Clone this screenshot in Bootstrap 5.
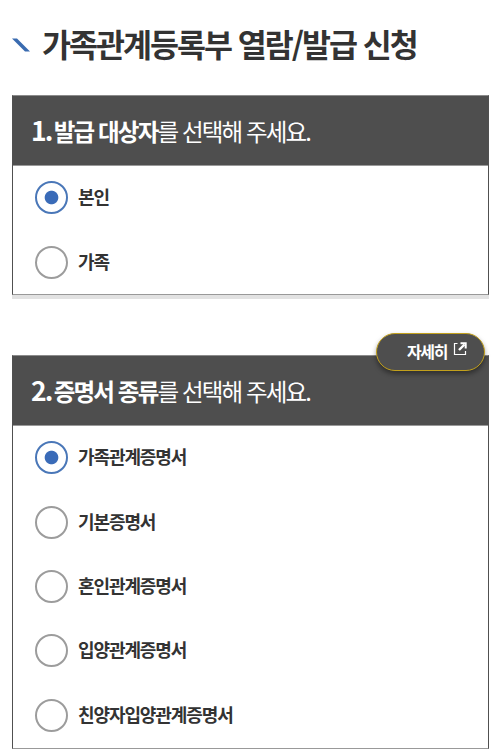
<!DOCTYPE html>
<html lang="ko">
<head>
<meta charset="utf-8">
<meta name="viewport" content="width=device-width, initial-scale=1">
<title>가족관계등록부 열람/발급 신청</title>
<link href="https://cdn.jsdelivr.net/npm/bootstrap@5.3.0/dist/css/bootstrap.min.css" rel="stylesheet">
<style>
  body { font-family: "Noto Sans CJK KR", sans-serif; color: #333; background: #fff; overflow: hidden; }
  .page { padding: 0 11px 0 12px; height: 749px; overflow: hidden; }
  .page-title { height: 95px; padding-bottom: 7px; }
  .page-title svg { width: 18px; height: 14px; margin: 1px 12px 0 0; }
  .page-title h1 { font-size: 31.5px; font-weight: 700; letter-spacing: -2px; line-height: 1; }
  .panel { border: 1px solid #505050; border-top-color: #8b8b8b; border-bottom-color: #999; }
  .panel-first { height: 200px; box-shadow: 0 4px 0 #e2e2e2; margin-bottom: 60px; }
  .panel-second { height: 394px; }
  .panel-head { height: 70px; background: #4e4e4e; color: #fff; padding: 0 0 1px 18px; border-bottom: 1px solid #999; }
  .panel-head h2 { font-size: 23.5px; font-weight: 400; letter-spacing: -1.85px; line-height: 1; }
  .panel-head strong { font-weight: 700; }
  .panel-head .step { font-size: 26.5px; letter-spacing: -2px; line-height: 1; margin-right: -2.2px; }
  .option { height: 64.4px; padding-left: 22px; padding-bottom: 1px; }
  .option .form-check-input { width: 33px; height: 33px; border: 2px solid #9c9c9c; background: #fff; flex: none; }
  .option .form-check-input:checked { border-color: #4a77b8; background: radial-gradient(circle, #3a6bb8 6.3px, #fff 7.3px); }
  .option label { font-size: 18px; font-weight: 700; letter-spacing: -1.1px; line-height: 1; margin: 0 0 3px 10px; }
  .detail-btn { top: -23px; right: 3px; width: 109px; height: 38px; background: #4e4e4e; border: 1px solid #c2a01c; color: #fff;
    font-size: 16px; font-weight: 700; letter-spacing: -1.4px; line-height: 1; padding: 0 17px 2px 0; box-shadow: 0 3px 5px rgba(0,0,0,.4); }
  .detail-btn:hover { background: #4e4e4e; color: #fff; }
  .detail-btn svg { width: 14px; height: 14px; margin-left: 6px; margin-bottom: 4px; }
</style>
</head>
<body>
<main class="page">
  <header class="page-title d-flex align-items-center">
    <svg viewBox="0 0 18 14" aria-hidden="true"><path d="M0 .5H5L18 13.5H13Z" fill="#3a6bb0"/></svg>
    <h1 class="m-0 text-nowrap">가족관계등록부 열람/발급 신청</h1>
  </header>

  <section class="panel panel-first">
    <div class="panel-head d-flex align-items-center"><h2 class="m-0"><strong><span class="step">1.</span> 발급 대상자</strong>를 선택해 주세요.</h2></div>
    <div class="option d-flex align-items-center"><input class="form-check-input m-0" type="radio" name="target" id="t1" checked><label for="t1">본인</label></div>
    <div class="option d-flex align-items-center"><input class="form-check-input m-0" type="radio" name="target" id="t2"><label for="t2">가족</label></div>
  </section>

  <section class="panel panel-second position-relative">
    <button type="button" class="detail-btn btn rounded-pill position-absolute d-flex align-items-center justify-content-end">자세히
      <svg viewBox="0 0 14 14" fill="none" stroke="#fff" aria-hidden="true"><path d="M4.5 1.5H1.5V12.5H12.5V9" stroke-width="1.2"/><path d="M6 8L11.5 2.5" stroke-width="2.4"/><path d="M7.5 1.3H12.7V6.5" stroke-width="2"/></svg>
    </button>
    <div class="panel-head d-flex align-items-center"><h2 class="m-0"><strong><span class="step">2.</span> 증명서 종류</strong>를 선택해 주세요.</h2></div>
    <div class="option d-flex align-items-center"><input class="form-check-input m-0" type="radio" name="kind" id="k1" checked><label for="k1">가족관계증명서</label></div>
    <div class="option d-flex align-items-center"><input class="form-check-input m-0" type="radio" name="kind" id="k2"><label for="k2">기본증명서</label></div>
    <div class="option d-flex align-items-center"><input class="form-check-input m-0" type="radio" name="kind" id="k3"><label for="k3">혼인관계증명서</label></div>
    <div class="option d-flex align-items-center"><input class="form-check-input m-0" type="radio" name="kind" id="k4"><label for="k4">입양관계증명서</label></div>
    <div class="option d-flex align-items-center"><input class="form-check-input m-0" type="radio" name="kind" id="k5"><label for="k5">친양자입양관계증명서</label></div>
  </section>
</main>
<script src="https://cdn.jsdelivr.net/npm/bootstrap@5.3.0/dist/js/bootstrap.bundle.min.js"></script>
</body>
</html>
